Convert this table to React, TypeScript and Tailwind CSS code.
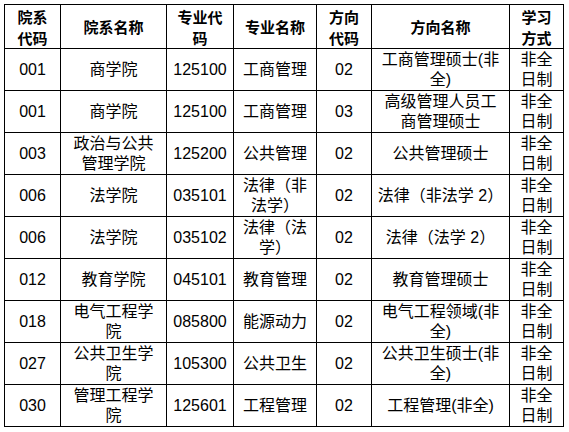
const header = [
  ["院系", "代码"],
  ["院系名称"],
  ["专业代", "码"],
  ["专业名称"],
  ["方向", "代码"],
  ["方向名称"],
  ["学习", "方式"],
];

const rows: string[][][] = [
  [["001"], ["商学院"], ["125100"], ["工商管理"], ["02"], ["工商管理硕士(非", "全)"], ["非全", "日制"]],
  [["001"], ["商学院"], ["125100"], ["工商管理"], ["03"], ["高级管理人员工", "商管理硕士"], ["非全", "日制"]],
  [["003"], ["政治与公共", "管理学院"], ["125200"], ["公共管理"], ["02"], ["公共管理硕士"], ["非全", "日制"]],
  [["006"], ["法学院"], ["035101"], ["法律（非", "法学）"], ["02"], ["法律（非法学 2）"], ["非全", "日制"]],
  [["006"], ["法学院"], ["035102"], ["法律（法", "学）"], ["02"], ["法律（法学 2）"], ["非全", "日制"]],
  [["012"], ["教育学院"], ["045101"], ["教育管理"], ["02"], ["教育管理硕士"], ["非全", "日制"]],
  [["018"], ["电气工程学", "院"], ["085800"], ["能源动力"], ["02"], ["电气工程领域(非", "全)"], ["非全", "日制"]],
  [["027"], ["公共卫生学", "院"], ["105300"], ["公共卫生"], ["02"], ["公共卫生硕士(非", "全)"], ["非全", "日制"]],
  [["030"], ["管理工程学", "院"], ["125601"], ["工程管理"], ["02"], ["工程管理(非全)"], ["非全", "日制"]],
];

const widths = ["w-[56px]", "w-[106px]", "w-[67px]", "w-[83px]", "w-[55px]", "w-[138px]", "w-[54px]"];

function Lines({ lines, tall }: { lines: string[]; tall?: boolean }) {
  return (
    <div
      className={`flex flex-col items-center justify-center overflow-hidden ${tall ? "h-[43px]" : "h-[41px]"}`}
    >
      {lines.map((l, i) => (
        <div key={i} className="whitespace-nowrap">
          {l}
        </div>
      ))}
    </div>
  );
}

export default function App() {
  return (
    <div className="w-[569px] h-[432px] bg-white pt-[4px] pl-[4px]">
      <table
        className="table-fixed border-collapse text-black text-[16px] leading-[20px]"
        style={{ fontFamily: '"Liberation Sans", "Noto Sans CJK SC", sans-serif' }}
      >
        <colgroup>
          {widths.map((w, i) => (
            <col key={i} className={w} />
          ))}
        </colgroup>
        <thead>
          <tr>
            {header.map((h, i) => (
              <th
                key={i}
                className="border border-black p-0 text-center align-middle font-bold text-[15px] leading-[21px]"
                style={{ fontFamily: '"Noto Sans CJK SC", sans-serif' }}
              >
                <Lines lines={h} tall />
              </th>
            ))}
          </tr>
        </thead>
        <tbody>
          {rows.map((r, ri) => (
            <tr key={ri}>
              {r.map((c, ci) => (
                <td key={ci} className="border border-black p-0 text-center align-middle">
                  <Lines lines={c} />
                </td>
              ))}
            </tr>
          ))}
        </tbody>
      </table>
    </div>
  );
}
